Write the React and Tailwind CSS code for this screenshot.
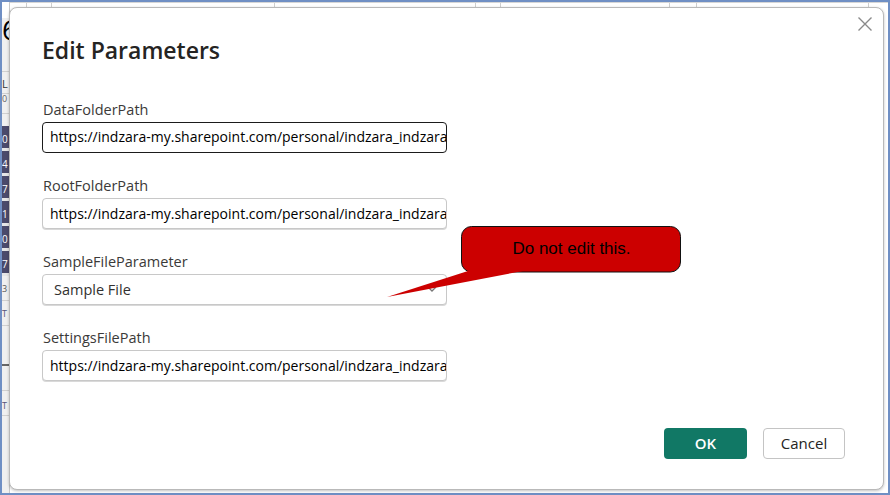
import React from "react";

const URL = "https://indzara-my.sharepoint.com/personal/indzara_indzara_com/Documents/Data";

function Field({ label, children }) {
  return (
    <div className="flex flex-col">
      <div className="h-[20px] leading-[20px] text-[14.5px] text-[#3b3a39] pl-[1px]">{label}</div>
      <div className="mt-[2px]">{children}</div>
    </div>
  );
}

function TextBox({ value, focused }) {
  return (
    <div
      className={
        focused
          ? "w-[405px] h-[31px] rounded-[4px] border-[1.5px] border-[#1b1b1b] pl-[7px] overflow-hidden whitespace-nowrap leading-[28px] text-[14px] text-black bg-white"
          : "w-[405px] h-[31px] rounded-[4px] border border-[#c8c8c8] shadow-[0_1px_0_#d9d9d9] pl-[7px] overflow-hidden whitespace-nowrap leading-[29px] text-[14px] text-black bg-white"
      }
    >
      {value}
    </div>
  );
}

export default function App() {
  const lines = [27, 52, 275, 476, 501, 670, 697, 869];
  const darkCells = ["0", "4", "7", "1", "0", "7"];
  return (
    <div
      className="relative w-[890px] h-[495px] bg-[#6f8fc4] p-[2px] overflow-hidden"
      style={{ fontFamily: '"Open Sans", "Noto Sans", sans-serif' }}
    >
      {/* spreadsheet behind */}
      <div className="relative w-full h-full bg-[#f3f3f3] flex">
        <div className="w-[8px] h-full flex flex-col bg-[#f0f0f0] border-r border-[#c9c9c9] text-[10px] leading-none overflow-hidden">
          <div className="h-[16px] bg-white"></div>
          <div className="h-[24px] text-[28px] leading-[22px] text-black overflow-hidden">6</div>
          <div className="h-[30px] border-b border-[#d0d0d0]"></div>
          <div className="h-[22px] text-[11px] text-[#333] pt-[6px] border-b border-[#d0d0d0]">L</div>
          <div className="h-[20px] text-[9px] text-[#666] border-b border-[#d0d0d0]">0</div>
          <div className="h-[12px]"></div>
          {darkCells.map((d, i) => (
            <div key={i} className="h-[25px] bg-[#4b4a6b] text-white text-[10px] pt-[8px] border-b-[3px] border-[#e6e6e6]">{d}</div>
          ))}
          <div className="h-[25px] text-[9px] text-[#555] pt-[8px] border-b border-[#d0d0d0]">3</div>
          <div className="h-[25px] text-[9px] text-[#557] pt-[8px] border-b border-[#d0d0d0]">T</div>
          <div className="h-[40px] border-b-2 border-[#666]"></div>
          <div className="h-[25px] border-b border-[#d0d0d0]"></div>
          <div className="h-[25px] text-[9px] text-[#557] pt-[10px] border-b border-[#d0d0d0]">T</div>
        </div>
        <div className="flex-1 h-full bg-white border-t border-[#d6d6d6] flex">
          <div className="w-full h-[6px] flex">
            {lines.map((x, i) => (
              <div key={i} className="h-full border-r border-[#cfcfcf]" style={{ width: (i === 0 ? x - 10 : x - lines[i - 1]) + "px" }}></div>
            ))}
          </div>
        </div>
      </div>

      {/* modal dialog */}
      <div className="absolute left-[9px] top-[7px] w-[875px] h-[483px] bg-white rounded-[8px] border border-[#b9b9b9] shadow-[0_1px_3px_rgba(0,0,0,0.25)] flex flex-col pl-[32px] pr-[38px]">
        <button className="absolute right-[5px] top-[3px] w-[26px] h-[26px] flex items-center justify-center">
          <svg width="16" height="16" viewBox="0 0 16 16">
            <path d="M1.5 1.5 L14.5 14.5 M14.5 1.5 L1.5 14.5" stroke="#8a8a8a" strokeWidth="1.4" fill="none" />
          </svg>
        </button>
        <div className="mt-[26px] h-[32px] leading-[32px] text-[23px] font-semibold text-[#252423]">Edit Parameters</div>
        <div className="mt-[34px] flex flex-col gap-[23px]">
          <Field label="DataFolderPath">
            <TextBox value={URL} focused />
          </Field>
          <Field label="RootFolderPath">
            <TextBox value={URL} />
          </Field>
          <Field label="SampleFileParameter">
            <div className="relative w-[405px] h-[31px] rounded-[4px] border border-[#c8c8c8] shadow-[0_1px_0_#d9d9d9] pl-[11px] leading-[29px] text-[14.5px] text-[#323130] bg-white">
              Sample File
              <svg className="absolute right-[9px] top-[11px]" width="10" height="7" viewBox="0 0 10 7">
                <path d="M1 1 L5 5 L9 1" stroke="#777" strokeWidth="1.3" fill="none" />
              </svg>
            </div>
          </Field>
          <Field label="SettingsFilePath">
            <TextBox value={URL} />
          </Field>
        </div>
        <div className="mt-auto mb-[30px] flex justify-end gap-[16px]">
          <button className="w-[83px] h-[31px] rounded-[4px] bg-[#117865] text-white text-[15px] font-semibold">OK</button>
          <button className="w-[82px] h-[31px] rounded-[4px] bg-white border border-[#c4c4c4] text-[15px] text-[#252423]">Cancel</button>
        </div>
      </div>

      {/* callout annotation */}
      <div className="absolute left-[386px] top-[225px] w-[297px] h-[74px]">
        <svg width="297" height="74" viewBox="0 0 297 74" className="absolute left-0 top-0">
          <rect x="75.5" y="1.5" width="219" height="45.5" rx="10" ry="10" fill="#cc0000" stroke="#111" strokeWidth="1" />
          <path d="M82 46 L1 72 L137 46 Z" fill="#cc0000" />
        </svg>
        <div
          className="absolute left-[76px] top-[1px] w-[219px] h-[45px] flex items-center justify-center text-[17px] text-black"
          style={{ fontFamily: '"Liberation Sans", Arial, sans-serif' }}
        >
          Do not edit this.
        </div>
      </div>
    </div>
  );
}
